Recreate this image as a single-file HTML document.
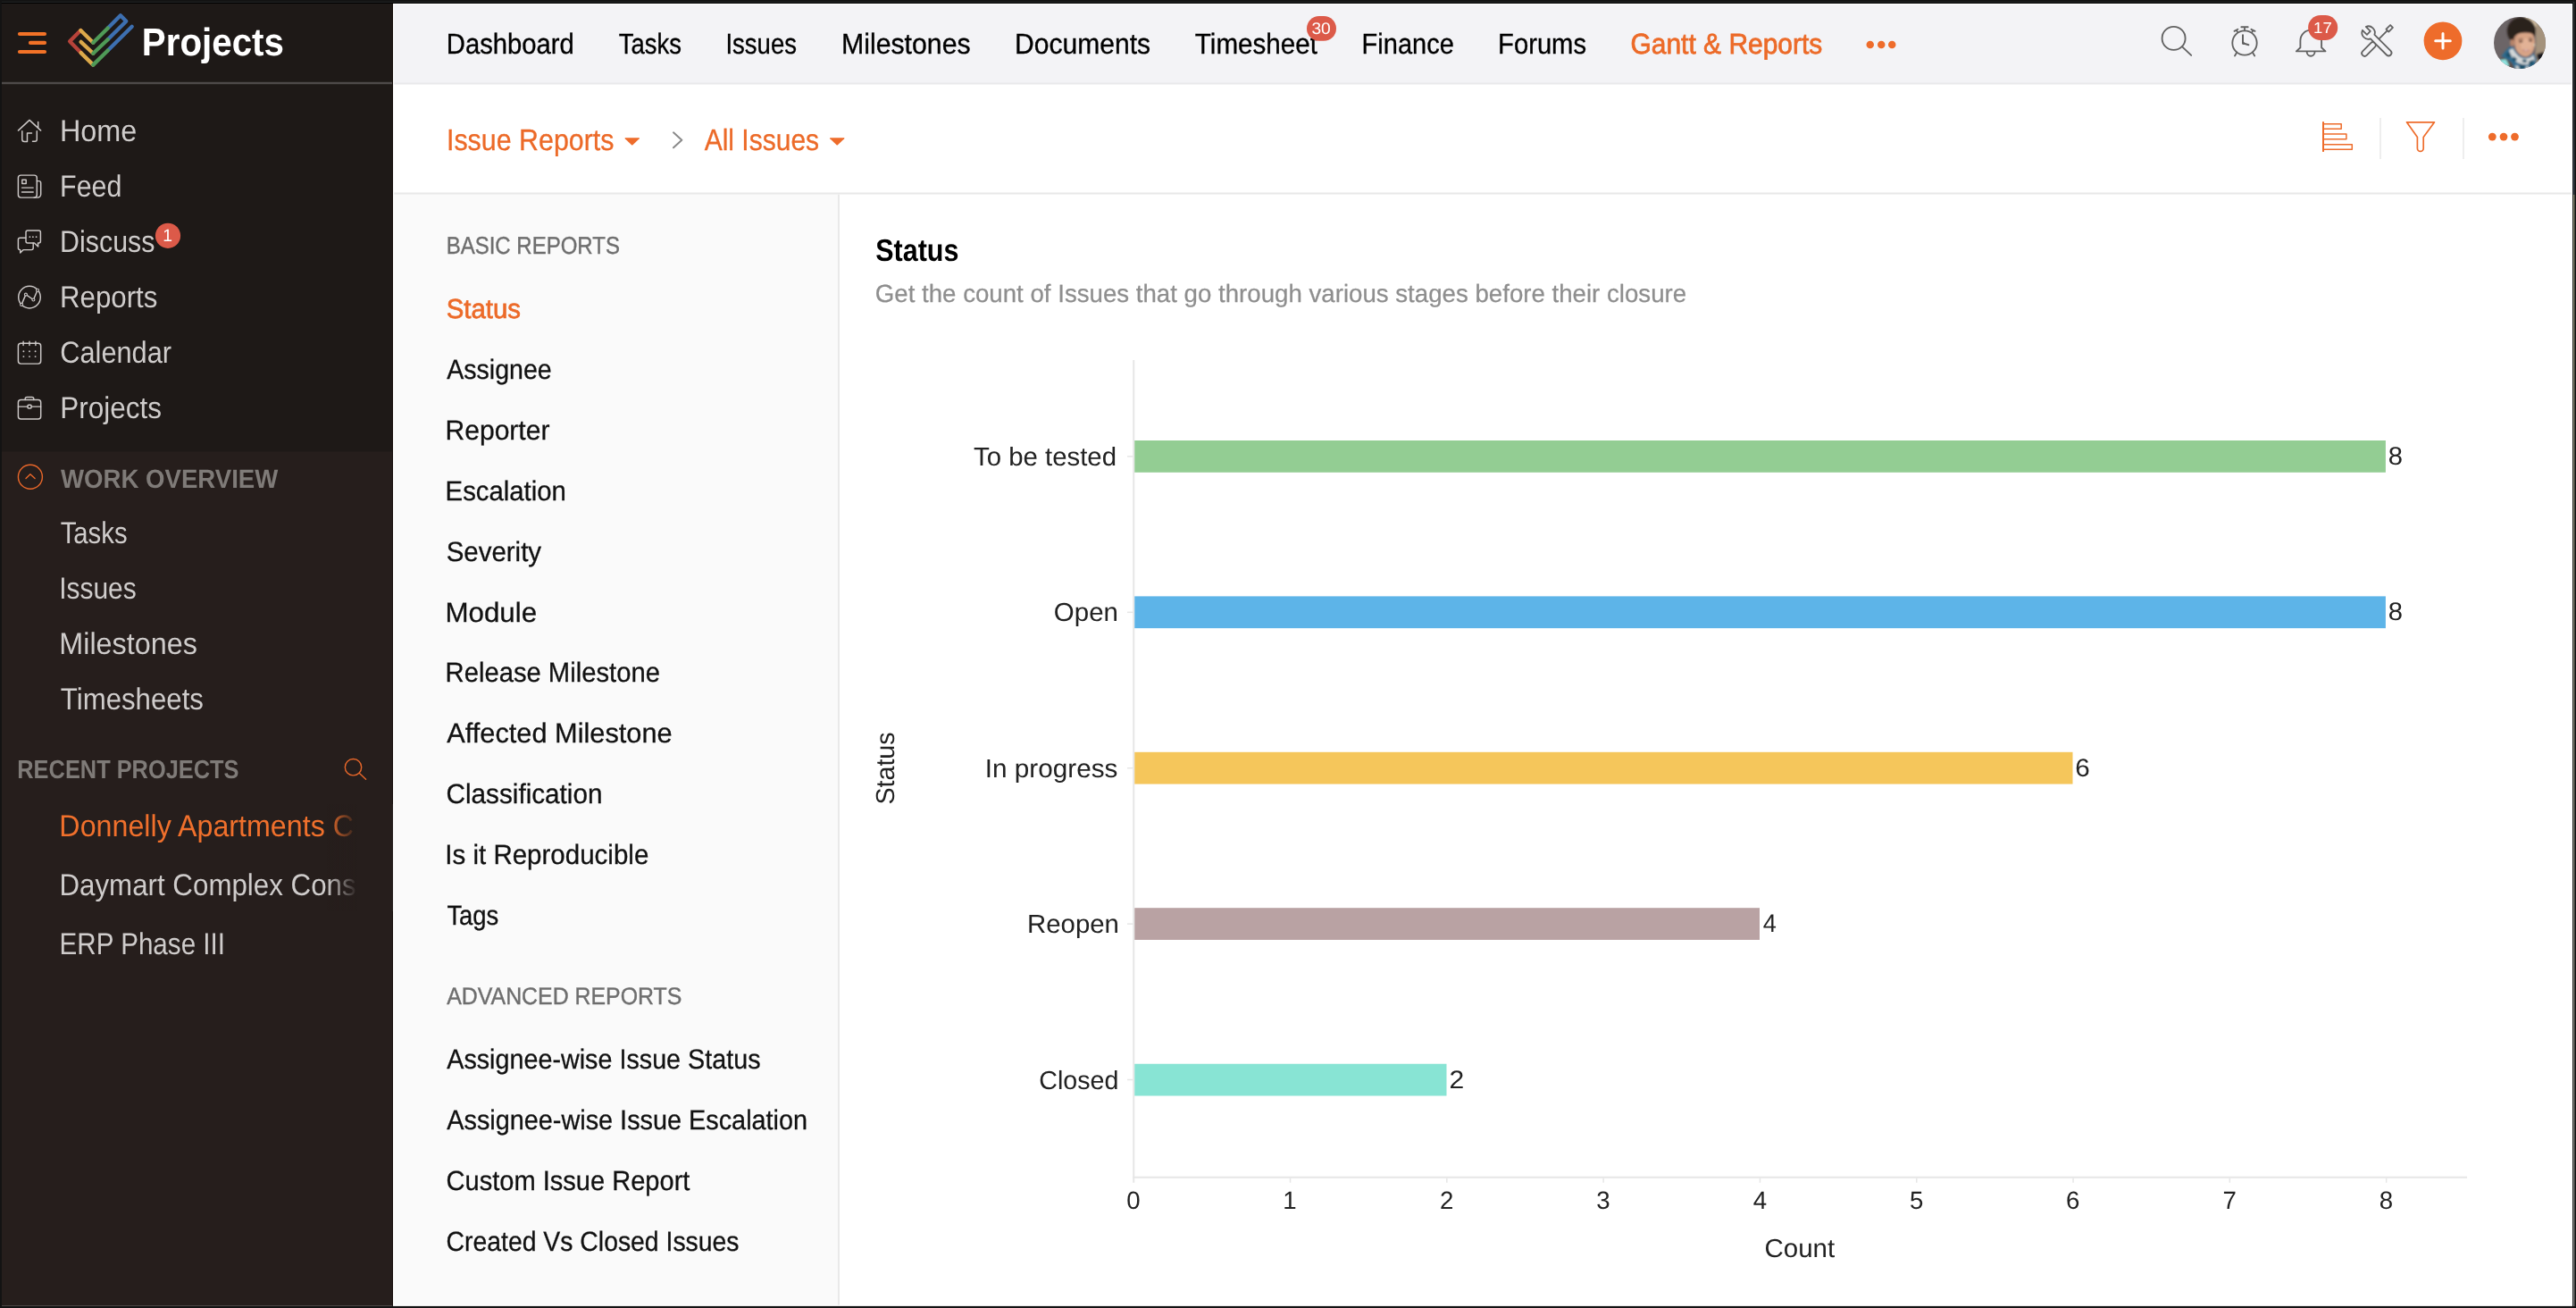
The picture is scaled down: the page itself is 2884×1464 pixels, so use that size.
<!DOCTYPE html>
<html><head><meta charset="utf-8"><title>Projects</title>
<style>
html,body{margin:0;padding:0;}
body{width:2884px;height:1464px;overflow:hidden;position:relative;background:#121212;font-family:"Liberation Sans",sans-serif;}
svg{position:absolute;overflow:visible;}
#tx{will-change:transform;}
text{white-space:pre;}

</style></head><body>
<svg width="2884" height="1464" viewBox="0 0 2884 1464" style="left:0;top:0">
<defs>
<linearGradient id="fd1" x1="0" x2="1" y1="0" y2="0"><stop offset="0" stop-color="#261e1c" stop-opacity="0"/><stop offset="1" stop-color="#261e1c" stop-opacity="1"/></linearGradient>
<clipPath id="av"><circle cx="2821" cy="47.9" r="29"/></clipPath>
<filter id="bl" filterUnits="userSpaceOnUse" x="2780" y="6" width="84" height="84"><feGaussianBlur stdDeviation="1.1"/></filter>
<linearGradient id="edge" gradientUnits="userSpaceOnUse" x1="0" y1="0" x2="0" y2="1464">
<stop offset="0" stop-color="#2e3032"/><stop offset="0.09" stop-color="#30343a"/><stop offset="0.13" stop-color="#3a4450"/><stop offset="0.1485" stop-color="#3a4450"/>
<stop offset="0.1492" stop-color="#939379"/><stop offset="0.6" stop-color="#8e8e80"/><stop offset="1" stop-color="#8a8a8a"/></linearGradient>
</defs>
<!-- frame + backgrounds -->
<rect x="0" y="0" width="2884" height="1464" fill="#131313"/>
<rect x="1.8" y="1.8" width="2880.3" height="1.2" fill="#232527"/>
<rect x="1.8" y="2.9" width="2880.3" height="1.2" fill="#000"/>
<rect x="2880.7" y="2" width="1.6" height="1460" fill="url(#edge)"/>
<rect x="2880" y="3" width="0.8" height="1459" fill="#000"/>
<rect x="2" y="4" width="2878.1" height="1457.9" fill="#ffffff"/>
<rect x="2" y="4" width="438" height="1457.8" fill="#261e1c"/>
<rect x="2" y="4" width="438" height="501.5" fill="#1e1917"/>
<rect x="439" y="4" width="1" height="1457.8" fill="#170f0c"/>
<rect x="2" y="91.8" width="437" height="2.4" fill="#4e4a49"/>
<rect x="441.3" y="5.3" width="2437.4" height="88" fill="#f3f3f6"/>
<rect x="441.3" y="92.5" width="2437.4" height="2" fill="#e9e9eb"/>
<rect x="441.3" y="216" width="497" height="1244.6" fill="#fafafa"/>
<rect x="441.3" y="215.5" width="2437.4" height="2" fill="#e8e8e8"/>
<rect x="938" y="217.5" width="2" height="1243.1" fill="#e9e9e9"/>

<!-- hamburger -->
<g stroke="#f37227" stroke-width="4.2" stroke-linecap="round" fill="none">
<path d="M22,38H50M34,47.9H50M22,58H50"/>
</g>
<!-- logo -->
<g stroke-width="4.3" stroke-linecap="round" stroke-linejoin="round" fill="none">
<path d="M90.3,34 L78.1,46.2 L90.6,59.1" stroke="#b8433a"/>
<path d="M90.6,59.1 L104.3,72.6" stroke="#dca94a"/>
<path d="M90.6,46.9 L104.3,59.7" stroke="#dca94a"/>
<path d="M90.3,34 L104.3,47.8" stroke="#dca94a"/>
<path d="M120.7,44.3 L141.3,23.8 L134.9,17.3 L120.7,31.5" stroke="#3d6fb0"/>
<path d="M120.7,56.5 L147.7,29.8" stroke="#3d6fb0"/>
<path d="M104.3,72.6 L120.7,56.5" stroke="#4f9a57"/>
<path d="M104.3,59.7 L120.7,44.3" stroke="#4f9a57"/>
<path d="M104.3,47.8 L120.7,31.5" stroke="#4f9a57"/>
</g>

<!-- sidebar icons -->
<g stroke="#cdc9c8" stroke-width="1.45" fill="none" stroke-linecap="round" stroke-linejoin="round">
<!-- home -->
<path d="M20.4,146.1 L33,134.4 L45.7,146.1"/>
<path d="M42.7,136.5 V142.7"/>
<path d="M24.8,146.8 V156 Q24.8,158.5 27.3,158.5 H30.5 V148.9 H35.5"/>
<path d="M36.5,158.3 H39 Q41.3,158.3 41.3,156 V146.8"/>
<!-- feed -->
<rect x="20.4" y="196.1" width="20.9" height="25" rx="3"/>
<path d="M41.3,202.6 H43.5 a2.2,2.2 0 0 1 2.2,2.2 V217.6 a3.5,3.5 0 0 1 -3.5,3.5 H38"/>
<rect x="24.8" y="201.2" width="4.4" height="4.4"/>
<path d="M24.5,210.1 H37.2 M24.5,215 H37.2"/>
<!-- discuss -->
<path d="M31,258 H43.4 a2,2 0 0 1 2,2 V270 a2,2 0 0 1 -2,2 H42.5 L42.7,276 L38.5,272 H31 a2,2 0 0 1 -2,-2 V260 a2,2 0 0 1 2,-2 Z"/>
<path d="M28.9,266.3 H22.4 a2,2 0 0 0 -2,2 V277.6 a2,2 0 0 0 2,2 H22.7 V283 L26.2,279.6 H35.2 a2,2 0 0 0 2,-2 V272"/>
<!-- reports -->
<circle cx="33" cy="332.6" r="12.3"/>
<path d="M24.1,340.9 L28.9,329.6 L37.4,335.5 L42,324.8"/>
<!-- calendar -->
<rect x="20.4" y="384.2" width="25.3" height="22.9" rx="3"/>
<path d="M26.1,382.3 V386.4 M33,382.3 V386.4 M39.9,382.3 V386.4"/>
<!-- briefcase -->
<rect x="20.4" y="447.5" width="25.3" height="21.5" rx="3"/>
<path d="M28.2,447.5 V446.5 a2,2 0 0 1 2,-2 H35.8 a2,2 0 0 1 2,2 V447.5"/>
<path d="M20.4,455.1 H31 M35.1,455.1 H45.7"/>
<rect x="31" y="453.2" width="4.1" height="3.7" rx="1"/>
</g>
<g fill="#c9c5c4">
<circle cx="33.4" cy="265.2" r="0.9"/><circle cx="36.9" cy="265.2" r="0.9"/><circle cx="40.6" cy="265.2" r="0.9"/>
<circle cx="26.4" cy="393.3" r="0.95"/><circle cx="33" cy="393.3" r="0.95"/><circle cx="39.6" cy="393.3" r="0.95"/>
<circle cx="26.4" cy="399.1" r="0.95"/><circle cx="33" cy="399.1" r="0.95"/><circle cx="39.6" cy="399.1" r="0.95"/>
</g>
<g fill="#1e1918" stroke="#c9c5c4" stroke-width="1.1">
<circle cx="24.1" cy="340.9" r="1.5"/><circle cx="28.9" cy="329.6" r="1.5"/><circle cx="37.4" cy="335.5" r="1.5"/><circle cx="42" cy="324.8" r="1.5"/>
</g>
<!-- work overview circle -->
<g stroke="#e8672a" stroke-width="1.4" fill="none" stroke-linecap="round" stroke-linejoin="round">
<circle cx="33.9" cy="533.7" r="13.5"/>
<path d="M29,535.5 L33.9,530.7 L39.1,535.5"/>
<!-- recent search -->
<circle cx="395.5" cy="858.7" r="9.2"/>
<path d="M402.2,865.3 L409.6,872.2"/>
</g>
<!-- badges -->

<!-- nav dots -->
<g fill="#ee6c2b"><circle cx="2093.75" cy="50" r="4.25"/><circle cx="2106.25" cy="50" r="4.25"/><circle cx="2118.25" cy="50" r="4.25"/></g>
<!-- nav right icons -->
<g stroke="#626262" stroke-width="1.85" fill="none" stroke-linecap="round" stroke-linejoin="round">
<circle cx="2433.6" cy="42.9" r="13"/>
<path d="M2442.9,52.2 L2453.2,61.9"/>
<!-- clock -->
<circle cx="2513" cy="48" r="13.7"/>
<path d="M2509.3,30.2 H2516.7 M2513,30.2 V34.3 M2501.5,34.9 L2505.4,32.8 M2503.9,33.9 L2505.1,36 M2520.4,32.8 L2524.6,34.9 M2522.5,33.9 L2521.3,36 M2504.4,58.6 L2502,62.5 M2521.8,58.6 L2524.2,62.5"/>
<path d="M2511,39.3 V48.3 L2517.4,50.3" stroke-width="2"/>
<!-- bell -->
<path d="M2570.9,57.4 L2575.4,53.3 V45.5 a11.85,11.85 0 0 1 23.7,0 V53.3 L2603.5,57.4 Z"/>
<path d="M2582.7,58.3 a4.4,4.4 0 0 0 8.8,0"/>
</g>
<circle cx="2511.7" cy="48.4" r="1.5" fill="#626262"/>
<!-- tools -->
<g fill="#f3f3f6" stroke="#626262" stroke-width="1.8" stroke-linecap="round" stroke-linejoin="round">
<g transform="translate(2647.4,59.6) rotate(45)">
<path d="M-3.2,0 V-13 a3.2,3.2 0 0 1 6.4,0 V0 a3.2,3.2 0 0 1 -6.4,0 Z"/>
<path d="M0,-16.2 V-36"/>
<path d="M-2,-36 H2 V-42.6 H-2 Z"/>
</g>
<g transform="translate(2651.6,36.6) rotate(-45)">
<path d="M-2.7,-6.7 V0.4 H2.7 V-6.7 A7.2,7.2 0 0 1 3.2,6.45 V32 a3.2,3.2 0 0 1 -6.4,0 V6.45 A7.2,7.2 0 0 1 -2.7,-6.7 Z"/>
</g>
</g>
<!-- plus -->
<circle cx="2735" cy="45.8" r="21.4" fill="#ee6c2b"/>
<path d="M2726.7,45.8 H2743.3 M2735,37.5 V54.1" stroke="#fff" stroke-width="3" stroke-linecap="round"/>
<!-- avatar -->
<g clip-path="url(#av)">
<rect x="2790" y="16" width="64" height="64" fill="#6c6567"/>
<g filter="url(#bl)">
<path d="M2836,22 L2856,14 V84 H2842 Q2838,70 2838.5,58 Q2840,44 2838,32 Z" fill="#a4927c"/>
<path d="M2825.6,17 L2836,19.5 L2840,29 L2836,31 L2830,23 Z" fill="#dcc9ab"/>
<rect x="2830" y="23.6" width="3.4" height="2.8" fill="#2a4fb0"/>
<path d="M2840,60.5 L2848,58 V68 L2841,67 Z" fill="#15151a"/>
<ellipse cx="2822.9" cy="34.9" rx="16" ry="15.6" fill="#2c201e"/>
<ellipse cx="2812.6" cy="47.8" rx="2.3" ry="3.9" fill="#b9856a"/>
<path d="M2814.6,43 Q2816,38.6 2821,37.2 Q2828,35.4 2834.5,37.6 Q2837.6,40 2838,46 Q2838.6,54 2835,59 Q2831,63.6 2827.6,63.4 Q2822,63 2818,57.5 Q2814.4,52 2814.6,43 Z" fill="#d8a486"/>
<ellipse cx="2828.5" cy="50.5" rx="6.5" ry="7.5" fill="#e2b296"/>
<path d="M2814.8,44 Q2815.6,40 2820,37.5 L2817,44 L2817,54 Q2815,50 2814.8,44 Z" fill="#c9957a"/>
<ellipse cx="2822.2" cy="46.4" rx="2.3" ry="1" fill="#4a2f28"/>
<ellipse cx="2833" cy="45.5" rx="2.1" ry="1" fill="#4a2f28"/>
<path d="M2819.4,44.2 Q2822,43 2824.8,43.9 M2830.8,43.2 Q2833.2,42.3 2835.4,43.2" stroke="#5a3a30" stroke-width="0.8" fill="none"/>
<ellipse cx="2827.9" cy="56.3" rx="3.8" ry="1.5" fill="#c58a80"/>
<ellipse cx="2828" cy="56" rx="2.4" ry="0.7" fill="#e2c6bc"/>
<rect x="2836.4" y="49" width="1.6" height="2.6" fill="#e8dcc0"/>
<path d="M2799.8,64.8 L2809.1,63.2 L2815,67 L2820,80 H2796 Z" fill="#5b4e48"/>
<path d="M2801,68 L2809,65.5 L2817,80 H2806 Z" fill="#5b4e48"/>
<path d="M2796,67.5 L2805.5,66.3 L2809.3,73.5 L2802,77 Z" fill="#8fe3e0"/>
<path d="M2800.3,63 L2806,56 L2810,51.8 L2814,52.4 Q2816.5,58 2821,62 Q2827,66 2833,62.5 L2836.5,59 L2840,66 L2838,74 L2832,82 H2818 L2812,70 L2806,66 Z" fill="#2d6a8e"/>
<path d="M2809,56 L2813.5,54 Q2816,60 2821,63.5 Q2827,67.5 2834,63.8 L2836,61 L2838,67 L2833,72 L2824,72.5 L2816,69 L2811,62 Z" fill="#d3d7d8"/>
<path d="M2805,60.5 L2809.5,58.5 L2812,63 L2807.5,64.5 Z M2814,63 L2818,66 L2816,69.5 L2812.6,66.5 Z M2821,71.5 L2827,72.5 L2826,78 L2820,77 Z M2831,69 L2836.5,66.5 L2836,72 L2831.5,74 Z M2824,66.5 L2829,67 L2828.6,70 L2824,69.6 Z" fill="#1d4f69"/>
<path d="M2816,73 L2820,74 L2821,80 L2817,79 Z M2828,74 L2832,74.5 L2831,80 L2827,79 Z" fill="#c9cfd1"/>
</g>
</g>
<!-- subheader -->
<path d="M700,154.2 H715.5 Q716.3,154.4 715.7,155.2 L708.4,162.2 Q707.75,162.7 707.1,162.2 L699.8,155.2 Q699.2,154.4 700,154.2 Z" fill="#ee6c2b"/>
<path d="M929.5,154.2 H945 Q945.8,154.4 945.2,155.2 L937.9,162.2 Q937.25,162.7 936.6,162.2 L929.3,155.2 Q928.7,154.4 929.5,154.2 Z" fill="#ee6c2b"/>
<path d="M754,148.3 L763.3,156.8 L754,165.3" stroke="#8a8a8a" stroke-width="2" fill="none" stroke-linecap="round" stroke-linejoin="round"/>
<g stroke="#ee6c2b" stroke-width="1.5" fill="none" stroke-linejoin="round">
<rect x="2601" y="138.75" width="20.2" height="5.4"/>
<rect x="2601" y="150" width="25.9" height="5.7"/>
<rect x="2601" y="161.7" width="32.3" height="5.5"/>
<path d="M2694.5,136.8 H2725.5 L2713.2,153.5 V166 a3.4,3.4 0 0 1 -6.8,0 V153.5 Z" stroke-width="1.7"/>
</g>
<rect x="2600" y="136.2" width="2" height="33.7" fill="#ee6c2b"/>
<rect x="2664.1" y="132" width="1.7" height="46" fill="#ececec"/>
<rect x="2757" y="132" width="1.8" height="46" fill="#ececec"/>
<g fill="#ee6c2b"><circle cx="2790.3" cy="153.1" r="4.4"/><circle cx="2803" cy="153.1" r="4.4"/><circle cx="2815.5" cy="153.1" r="4.4"/></g>

<!-- chart -->
<rect x="1268.25" y="403" width="2" height="920.75" fill="#e6e6e6"/>
<rect x="1268.25" y="1316.75" width="1493.75" height="2" fill="#e6e6e6"/>
<g fill="#e6e6e6">
<rect x="1443.8" y="1318.75" width="1.5" height="5"/><rect x="1619.1" y="1318.75" width="1.5" height="5"/><rect x="1794.4" y="1318.75" width="1.5" height="5"/>
<rect x="1969.7" y="1318.75" width="1.5" height="5"/><rect x="2145" y="1318.75" width="1.5" height="5"/><rect x="2320.3" y="1318.75" width="1.5" height="5"/>
<rect x="2495.6" y="1318.75" width="1.5" height="5"/><rect x="2670.9" y="1318.75" width="1.5" height="5"/>
<rect x="1262" y="510.15" width="6.25" height="1.5"/><rect x="1262" y="684.55" width="6.25" height="1.5"/><rect x="1262" y="858.95" width="6.25" height="1.5"/>
<rect x="1262" y="1033.35" width="6.25" height="1.5"/><rect x="1262" y="1207.75" width="6.25" height="1.5"/>
</g>
<rect x="1270.25" y="493" width="1400.65" height="35.75" fill="#93cd93"/>
<rect x="1270.25" y="667.4" width="1400.65" height="35.75" fill="#5db4e8"/>
<rect x="1270.25" y="841.8" width="1050.25" height="35.75" fill="#f5c65b"/>
<rect x="1270.25" y="1016.2" width="699.75" height="35.75" fill="#b9a2a3"/>
<rect x="1270.25" y="1190.75" width="349.25" height="35.75" fill="#88e4d4"/>
</svg>

<svg id="tx" width="2884" height="1464" viewBox="0 0 2884 1464" style="left:0;top:0" text-rendering="geometricPrecision" font-family="Liberation Sans, sans-serif">
<text x="158.80" y="61.90" font-size="43.46" fill="#fff" font-weight="bold" textLength="159.15" lengthAdjust="spacingAndGlyphs">Projects</text>
<text x="66.94" y="158.00" font-size="34.16" fill="#cfcccb" textLength="86.40" lengthAdjust="spacingAndGlyphs">Home</text>
<text x="67.10" y="220.00" font-size="34.16" fill="#cfcccb" textLength="69.36" lengthAdjust="spacingAndGlyphs">Feed</text>
<text x="67.11" y="282.00" font-size="34.16" fill="#cfcccb" textLength="106.39" lengthAdjust="spacingAndGlyphs">Discuss</text>
<text x="67.04" y="344.00" font-size="34.16" fill="#cfcccb" textLength="109.39" lengthAdjust="spacingAndGlyphs">Reports</text>
<text x="67.24" y="406.00" font-size="34.16" fill="#cfcccb" textLength="124.87" lengthAdjust="spacingAndGlyphs">Calendar</text>
<text x="67.32" y="468.00" font-size="34.16" fill="#cfcccb" textLength="113.72" lengthAdjust="spacingAndGlyphs">Projects</text>
<text x="68.07" y="545.80" font-size="29.36" fill="#7f7b78" font-weight="bold" textLength="243.25" lengthAdjust="spacingAndGlyphs">WORK OVERVIEW</text>
<text x="67.64" y="608.00" font-size="34.16" fill="#cfcccb" textLength="74.92" lengthAdjust="spacingAndGlyphs">Tasks</text>
<text x="66.13" y="670.00" font-size="34.16" fill="#cfcccb" textLength="86.65" lengthAdjust="spacingAndGlyphs">Issues</text>
<text x="66.25" y="732.00" font-size="34.16" fill="#cfcccb" textLength="154.62" lengthAdjust="spacingAndGlyphs">Milestones</text>
<text x="67.80" y="794.00" font-size="34.16" fill="#cfcccb" textLength="160.13" lengthAdjust="spacingAndGlyphs">Timesheets</text>
<text x="19.30" y="871.20" font-size="29.07" fill="#7f7b78" font-weight="bold" textLength="248.19" lengthAdjust="spacingAndGlyphs">RECENT PROJECTS</text>
<text x="66.36" y="936.20" font-size="34.16" fill="#f0702c" textLength="329.67" lengthAdjust="spacingAndGlyphs">Donnelly Apartments C</text>
<text x="66.43" y="1002.20" font-size="34.16" fill="#cfcccb" textLength="332.20" lengthAdjust="spacingAndGlyphs">Daymart Complex Cons</text>
<text x="66.57" y="1068.00" font-size="34.16" fill="#cfcccb" textLength="185.46" lengthAdjust="spacingAndGlyphs">ERP Phase III</text>
<text x="499.80" y="60.00" font-size="32.12" fill="#000" stroke="#000" stroke-width="0.35" textLength="143.09" lengthAdjust="spacingAndGlyphs">Dashboard</text>
<text x="692.78" y="60.00" font-size="32.12" fill="#000" stroke="#000" stroke-width="0.35" textLength="70.21" lengthAdjust="spacingAndGlyphs">Tasks</text>
<text x="812.46" y="60.00" font-size="32.12" fill="#000" stroke="#000" stroke-width="0.35" textLength="79.53" lengthAdjust="spacingAndGlyphs">Issues</text>
<text x="942.02" y="60.00" font-size="32.12" fill="#000" stroke="#000" stroke-width="0.35" textLength="144.58" lengthAdjust="spacingAndGlyphs">Milestones</text>
<text x="1136.03" y="60.00" font-size="32.12" fill="#000" stroke="#000" stroke-width="0.35" textLength="152.05" lengthAdjust="spacingAndGlyphs">Documents</text>
<text x="1337.83" y="60.00" font-size="32.12" fill="#000" stroke="#000" stroke-width="0.35" textLength="137.13" lengthAdjust="spacingAndGlyphs">Timesheet</text>
<text x="1524.62" y="60.00" font-size="32.12" fill="#000" stroke="#000" stroke-width="0.35" textLength="103.17" lengthAdjust="spacingAndGlyphs">Finance</text>
<text x="1677.10" y="60.00" font-size="32.12" fill="#000" stroke="#000" stroke-width="0.35" textLength="98.95" lengthAdjust="spacingAndGlyphs">Forums</text>
<text x="1825.49" y="60.00" font-size="32.12" fill="#ec6a28" stroke="#ec6a28" stroke-width="0.75" textLength="214.84" lengthAdjust="spacingAndGlyphs">Gantt &amp; Reports</text>
<text x="499.94" y="168.00" font-size="33.43" fill="#ec6a28" stroke="#ec6a28" stroke-width="0.3" textLength="187.55" lengthAdjust="spacingAndGlyphs">Issue Reports</text>
<text x="788.69" y="168.00" font-size="33.43" fill="#ec6a28" stroke="#ec6a28" stroke-width="0.3" textLength="128.39" lengthAdjust="spacingAndGlyphs">All Issues</text>
<text x="499.63" y="283.70" font-size="27.25" fill="#6e6e6e" stroke="#6e6e6e" stroke-width="0.4" textLength="194.27" lengthAdjust="spacingAndGlyphs">BASIC REPORTS</text>
<text x="499.67" y="356.00" font-size="30.52" fill="#ec6a28" stroke="#ec6a28" stroke-width="0.7" textLength="83.30" lengthAdjust="spacingAndGlyphs">Status</text>
<text x="500.24" y="423.90" font-size="30.96" fill="#111" stroke="#111" stroke-width="0.3" textLength="117.53" lengthAdjust="spacingAndGlyphs">Assignee</text>
<text x="498.54" y="491.80" font-size="30.96" fill="#111" stroke="#111" stroke-width="0.3" textLength="116.86" lengthAdjust="spacingAndGlyphs">Reporter</text>
<text x="498.59" y="559.70" font-size="30.96" fill="#111" stroke="#111" stroke-width="0.3" textLength="135.31" lengthAdjust="spacingAndGlyphs">Escalation</text>
<text x="499.66" y="627.60" font-size="30.96" fill="#111" stroke="#111" stroke-width="0.3" textLength="106.40" lengthAdjust="spacingAndGlyphs">Severity</text>
<text x="498.43" y="695.50" font-size="30.96" fill="#111" stroke="#111" stroke-width="0.3" textLength="102.76" lengthAdjust="spacingAndGlyphs">Module</text>
<text x="498.60" y="763.40" font-size="30.96" fill="#111" stroke="#111" stroke-width="0.3" textLength="240.29" lengthAdjust="spacingAndGlyphs">Release Milestone</text>
<text x="500.24" y="831.30" font-size="30.96" fill="#111" stroke="#111" stroke-width="0.3" textLength="252.43" lengthAdjust="spacingAndGlyphs">Affected Milestone</text>
<text x="499.49" y="899.20" font-size="30.96" fill="#111" stroke="#111" stroke-width="0.3" textLength="175.04" lengthAdjust="spacingAndGlyphs">Classification</text>
<text x="498.28" y="967.10" font-size="30.96" fill="#111" stroke="#111" stroke-width="0.3" textLength="228.04" lengthAdjust="spacingAndGlyphs">Is it Reproducible</text>
<text x="500.38" y="1035.00" font-size="30.96" fill="#111" stroke="#111" stroke-width="0.3" textLength="57.91" lengthAdjust="spacingAndGlyphs">Tags</text>
<text x="500.25" y="1123.60" font-size="27.03" fill="#6e6e6e" stroke="#6e6e6e" stroke-width="0.4" textLength="263.09" lengthAdjust="spacingAndGlyphs">ADVANCED REPORTS</text>
<text x="500.24" y="1196.00" font-size="30.96" fill="#111" stroke="#111" stroke-width="0.3" textLength="351.29" lengthAdjust="spacingAndGlyphs">Assignee-wise Issue Status</text>
<text x="500.24" y="1263.95" font-size="30.96" fill="#111" stroke="#111" stroke-width="0.3" textLength="403.83" lengthAdjust="spacingAndGlyphs">Assignee-wise Issue Escalation</text>
<text x="499.52" y="1331.90" font-size="30.96" fill="#111" stroke="#111" stroke-width="0.3" textLength="272.89" lengthAdjust="spacingAndGlyphs">Custom Issue Report</text>
<text x="499.56" y="1399.85" font-size="30.96" fill="#111" stroke="#111" stroke-width="0.3" textLength="327.97" lengthAdjust="spacingAndGlyphs">Created Vs Closed Issues</text>
<text x="980.32" y="292.00" font-size="34.88" fill="#000" font-weight="bold" textLength="93.03" lengthAdjust="spacingAndGlyphs">Status</text>
<text x="979.81" y="337.70" font-size="27.91" fill="#8e8e8e" stroke="#8e8e8e" stroke-width="0.25" textLength="908.32" lengthAdjust="spacingAndGlyphs">Get the count of Issues that go through various stages before their closure</text>
<text x="1090.04" y="520.80" font-size="29.07" fill="#222" textLength="159.95" lengthAdjust="spacingAndGlyphs">To be tested</text>
<text x="1179.85" y="695.25" font-size="29.07" fill="#222" textLength="72.06" lengthAdjust="spacingAndGlyphs">Open</text>
<text x="1102.76" y="869.70" font-size="29.07" fill="#222" textLength="148.62" lengthAdjust="spacingAndGlyphs">In progress</text>
<text x="1149.99" y="1044.15" font-size="29.07" fill="#222" textLength="102.92" lengthAdjust="spacingAndGlyphs">Reopen</text>
<text x="1163.35" y="1218.60" font-size="29.07" fill="#222" textLength="89.10" lengthAdjust="spacingAndGlyphs">Closed</text>
<text x="2673.88" y="519.80" font-size="28.34" fill="#222" textLength="16.24" lengthAdjust="spacingAndGlyphs">8</text>
<text x="2673.88" y="694.25" font-size="28.34" fill="#222" textLength="16.24" lengthAdjust="spacingAndGlyphs">8</text>
<text x="2323.24" y="868.70" font-size="28.34" fill="#222" textLength="16.51" lengthAdjust="spacingAndGlyphs">6</text>
<text x="1973.73" y="1043.15" font-size="28.34" fill="#222" textLength="15.12" lengthAdjust="spacingAndGlyphs">4</text>
<text x="1622.44" y="1217.60" font-size="28.34" fill="#222" textLength="16.72" lengthAdjust="spacingAndGlyphs">2</text>
<text x="1261.36" y="1352.80" font-size="27.91" fill="#222" textLength="15.38" lengthAdjust="spacingAndGlyphs">0</text>
<text x="1436.28" y="1352.80" font-size="27.91" fill="#222" textLength="15.38" lengthAdjust="spacingAndGlyphs">1</text>
<text x="1611.96" y="1352.80" font-size="27.91" fill="#222" textLength="15.38" lengthAdjust="spacingAndGlyphs">2</text>
<text x="1787.34" y="1352.80" font-size="27.91" fill="#222" textLength="15.38" lengthAdjust="spacingAndGlyphs">3</text>
<text x="1962.65" y="1352.80" font-size="27.91" fill="#222" textLength="15.38" lengthAdjust="spacingAndGlyphs">4</text>
<text x="2137.89" y="1352.80" font-size="27.91" fill="#222" textLength="15.38" lengthAdjust="spacingAndGlyphs">5</text>
<text x="2313.07" y="1352.80" font-size="27.91" fill="#222" textLength="15.38" lengthAdjust="spacingAndGlyphs">6</text>
<text x="2488.45" y="1352.80" font-size="27.91" fill="#222" textLength="15.38" lengthAdjust="spacingAndGlyphs">7</text>
<text x="2663.76" y="1352.80" font-size="27.91" fill="#222" textLength="15.38" lengthAdjust="spacingAndGlyphs">8</text>
<text x="1975.50" y="1406.90" font-size="29.07" fill="#222" textLength="78.71" lengthAdjust="spacingAndGlyphs">Count</text>
<text x="1000.10" y="899.30" transform="rotate(-90 1001.40 899.30)" font-size="29.07" fill="#222" textLength="81.24" lengthAdjust="spacingAndGlyphs">Status</text>
<defs><linearGradient id="fd2" x1="0" x2="1" y1="0" y2="0"><stop offset="0" stop-color="#261e1c" stop-opacity="0"/><stop offset="1" stop-color="#261e1c" stop-opacity="1"/></linearGradient></defs>
<rect x="366" y="900" width="34" height="120" fill="url(#fd2)"/>
<rect x="400" y="900" width="40" height="120" fill="#261e1c"/>
<circle cx="188" cy="263.8" r="14.1" fill="#dc5a49"/>
<rect x="1463" y="18" width="33" height="27.75" rx="13.9" fill="#dc5a49"/>
<rect x="2584.1" y="16.9" width="33.1" height="28.1" rx="14" fill="#dc5a49"/>
<text x="182.36" y="270.20" font-size="19.33" fill="#fff">1</text>
<text x="1468.42" y="37.90" font-size="18.31" fill="#fff" textLength="21.38" lengthAdjust="spacingAndGlyphs">30</text>
<text x="2590.08" y="36.90" font-size="17.30" fill="#fff" textLength="20.76" lengthAdjust="spacingAndGlyphs">17</text>
</svg>
</body></html>
